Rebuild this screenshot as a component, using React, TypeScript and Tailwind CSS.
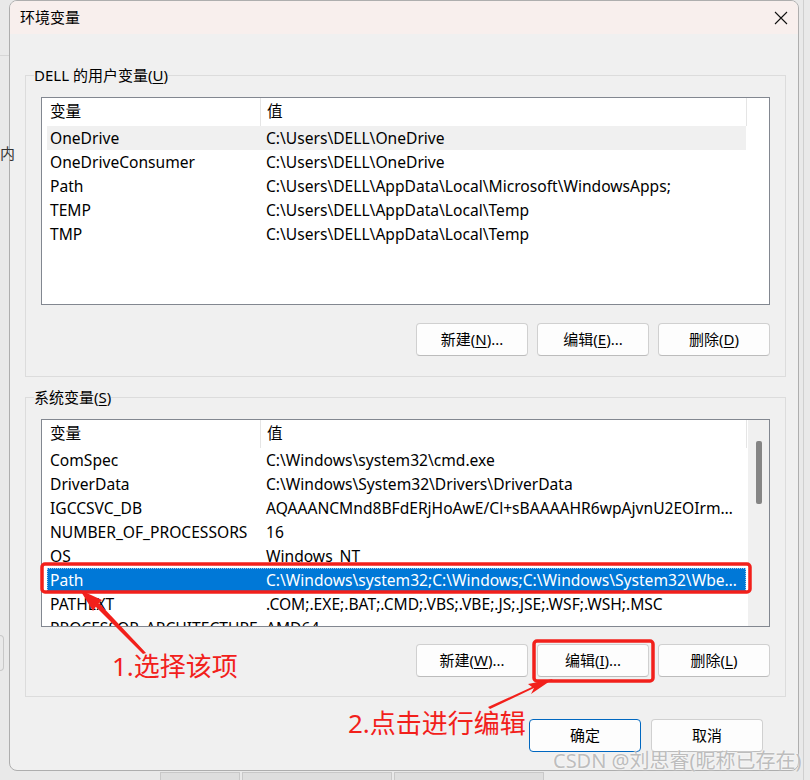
import React from 'react';

const FONT = "font-['Noto_Sans','Noto_Sans_CJK_SC',sans-serif]";

const userVars = [
  ['OneDrive', 'C:\\Users\\DELL\\OneDrive'],
  ['OneDriveConsumer', 'C:\\Users\\DELL\\OneDrive'],
  ['Path', 'C:\\Users\\DELL\\AppData\\Local\\Microsoft\\WindowsApps;'],
  ['TEMP', 'C:\\Users\\DELL\\AppData\\Local\\Temp'],
  ['TMP', 'C:\\Users\\DELL\\AppData\\Local\\Temp'],
];

const sysVars = [
  ['ComSpec', 'C:\\Windows\\system32\\cmd.exe'],
  ['DriverData', 'C:\\Windows\\System32\\Drivers\\DriverData'],
  ['IGCCSVC_DB', 'AQAAANCMnd8BFdERjHoAwE/Cl+sBAAAAHR6wpAjvnU2EOIrmAAAAAAIAAAAAABBmAAAA'],
  ['NUMBER_OF_PROCESSORS', '16'],
  ['OS', 'Windows_NT'],
  ['Path', 'C:\\Windows\\system32;C:\\Windows;C:\\Windows\\System32\\Wbem;C:\\Windows\\System32\\WindowsPowerShell'],
  ['PATHEXT', '.COM;.EXE;.BAT;.CMD;.VBS;.VBE;.JS;.JSE;.WSF;.WSH;.MSC'],
  ['PROCESSOR_ARCHITECTURE', 'AMD64'],
];

const Btn = ({ label, hot, tail, primary }: { label: string; hot: string; tail: string; primary?: boolean }) => (
  <button
    className={`w-[112px] h-[33px] rounded-[4px] border bg-[#fdfdfd] text-[15px] text-black flex items-center justify-center ${
      primary ? 'border-[#0067c0]' : 'border-[#d0d0d0] border-b-[#bcbcbc]'
    }`}
  >
    {label}
    {hot && (
      <>
        (<span className="underline underline-offset-2">{hot}</span>){tail}
      </>
    )}
  </button>
);

const VarList = ({ rows, selected, scroll }: { rows: string[][]; selected?: number; scroll?: boolean }) => (
  <div className="w-[729px] h-[208px] border border-[#828790] bg-white flex overflow-hidden text-[15.6px]">
    <div className="flex-1 pl-[5px] overflow-hidden">
      <div className="flex h-[28px] items-center">
        <div className="w-[213px] pl-[3px]">变量</div>
        <div className="w-[486px] h-full pl-[6px] border-l border-[#e5e5e5] flex items-center">值</div>
        <div className="h-full border-l border-[#e5e5e5]" />
      </div>
      {rows.map((r, i) => (
        <div
          key={r[0]}
          className={`flex h-[24px] w-[699px] items-center pt-[1px] ${
            i === selected
              ? 'bg-[#0078d7] text-white outline-1 outline-dotted outline-[#9ccbf0] -outline-offset-1'
              : i === 0 && !scroll
              ? 'bg-[#f0f0f0]'
              : ''
          }`}
        >
          <div className="w-[213px] pl-[3px] whitespace-nowrap overflow-hidden">{r[0]}</div>
          <div className="w-[486px] pl-[6px] pr-[4px] truncate">{r[1]}</div>
        </div>
      ))}
    </div>
    {scroll && (
      <div className="w-[21px] bg-[#f0f0f0] pt-[21px] flex justify-center">
        <div className="w-[6px] h-[63px] rounded-[2px] bg-[#858585]" />
      </div>
    )}
  </div>
);

export default function App() {
  return (
    <div className={`relative w-[810px] h-[780px] overflow-hidden bg-[#e9e9e9] text-[15px] text-black ${FONT}`}>
      {/* window behind the dialog */}
      <div className="absolute left-0 top-[55px] w-[9px] h-px bg-[#d6d6d6]" />
      <div className="absolute left-0 top-[142px] text-[15px] text-[#333]">内</div>
      <div className="absolute left-0 top-[635px] w-[4px] h-[36px] border border-l-0 border-[#c8c8c8] rounded-r" />
      <div className="absolute left-[160px] top-[772px] flex gap-[2px]">
        <div className="w-[80px] h-[12px] bg-[#dedede] border border-[#c8c8c8]" />
        <div className="w-[150px] h-[12px] bg-[#dedede] border border-[#c8c8c8]" />
        <div className="w-[150px] h-[12px] bg-[#dedede] border border-[#c8c8c8]" />
      </div>
      <div className="absolute left-[803px] top-0 w-px h-full bg-[#cfcfcf]" />

      <div className="ml-[9px] w-[790px] h-[771px] rounded-lg border border-[#aeaeae] bg-[#f0f0f0] overflow-hidden flex flex-col">
        <div className="h-[33px] shrink-0 bg-[#f8efed] flex items-center justify-between pl-[10px] pr-[12px]">
          <span className="text-[15px]">环境变量</span>
          <svg width="14" height="14" viewBox="0 0 14 14" className="mr-[-2px]">
            <path d="M1 1 L13 13 M13 1 L1 13" stroke="#111" strokeWidth="1.1" />
          </svg>
        </div>

        <fieldset className="ml-[15px] mt-[31px] w-[761px] border border-[#dcdcdc] p-0">
          <legend className="ml-[8px] h-[20px] leading-[20px]">
            DELL 的用户变量(<span className="underline underline-offset-2">U</span>)
          </legend>
          <div className="pl-[15px] pt-[12px] pb-[20px]">
            <VarList rows={userVars} />
            <div className="mt-[18px] w-[729px] flex justify-end gap-[9px]">
              <Btn label="新建" hot="N" tail="..." />
              <Btn label="编辑" hot="E" tail="..." />
              <Btn label="删除" hot="D" tail="" />
            </div>
          </div>
        </fieldset>

        <fieldset className="ml-[15px] mt-[10px] w-[761px] border border-[#dcdcdc] p-0">
          <legend className="ml-[8px] h-[20px] leading-[20px]">
            系统变量(<span className="underline underline-offset-2">S</span>)
          </legend>
          <div className="pl-[15px] pt-[12px] pb-[19px]">
            <VarList rows={sysVars} selected={5} scroll />
            <div className="mt-[17px] w-[729px] flex justify-end gap-[9px]">
              <Btn label="新建" hot="W" tail="..." />
              <Btn label="编辑" hot="I" tail="..." />
              <Btn label="删除" hot="L" tail="" />
            </div>
          </div>
        </fieldset>

        <div className="mt-[22px] pr-[35px] flex justify-end gap-[10px]">
          <Btn label="确定" hot="" tail="" primary />
          <Btn label="取消" hot="" tail="" />
        </div>
      </div>

      {/* annotations */}
      <svg className="absolute inset-0 pointer-events-none" width="810" height="780" viewBox="0 0 810 780">
        <rect x="42" y="564" width="708" height="28" rx="3" fill="none" stroke="#f2201b" strokeWidth="3.5" />
        <rect x="534" y="641" width="119" height="40" rx="3" fill="none" stroke="#f2201b" strokeWidth="3.5" />
        <path d="M146 653 L97 605 L93 611 L80 590 L102 600 L98 604 Z" fill="#f2201b" />
        <path d="M146 653 L143 654 L95 606 L99 603 Z" fill="#f2201b" />
        <path d="M490 709 L534 688 L531 694 L553 679 L528 684 L532 687 L488 707 Z" fill="#f2201b" />
      </svg>
      <div className="absolute left-[112px] top-[649px] text-[26px] leading-[34px] text-[#f2201b] whitespace-nowrap">1.选择该项</div>
      <div className="absolute left-[348px] top-[706px] text-[26px] leading-[34px] text-[#f2201b] whitespace-nowrap">2.点击进行编辑</div>
      <div className="absolute left-[553px] top-[748px] text-[20px] leading-[26px] text-[#bdbdbd] whitespace-nowrap [text-shadow:0_0_2px_#fff]">
        CSDN @刘思睿(昵称已存在)
      </div>
    </div>
  );
}
